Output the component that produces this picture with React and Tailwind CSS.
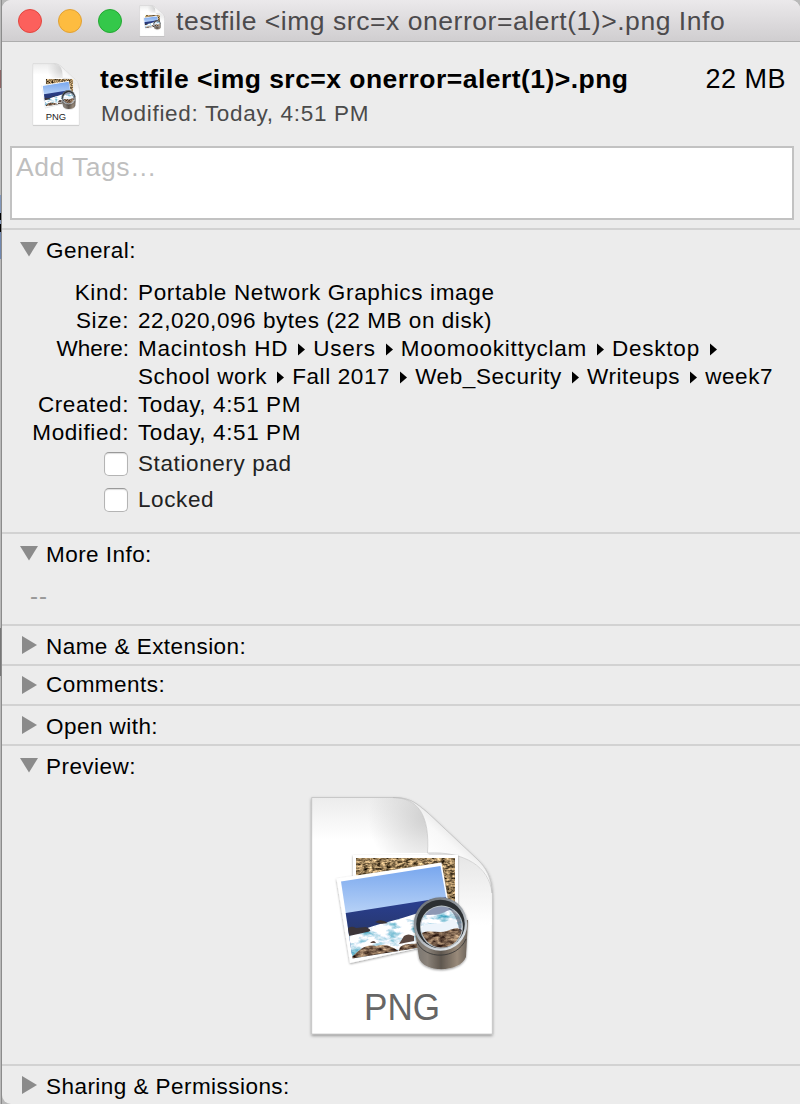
const doc = 'M11.7 12.5H93C110 12.5 116 18 128 28L178 75C188 85 192.3 93 192.3 112V249H11.7Z';

function PhotoArt({ id }) {
  return (
    <g>
      <defs>
        <linearGradient id={id + 'sky'} x1="0" y1="0" x2="0" y2=".5">
          <stop offset="0" stopColor="#77a6ee" />
          <stop offset="1" stopColor="#b9d3f7" />
        </linearGradient>
        <linearGradient id={id + 'sea'} x1="0" y1="0" x2="0" y2="1">
          <stop offset="0" stopColor="#2a3f95" />
          <stop offset=".6" stopColor="#27386f" />
          <stop offset="1" stopColor="#2f5aa5" />
        </linearGradient>
        <linearGradient id={id + 'barrel'} x1="0" y1="0" x2="1" y2="0">
          <stop offset="0" stopColor="#77736e" />
          <stop offset=".25" stopColor="#8a8279" />
          <stop offset=".5" stopColor="#5f574f" />
          <stop offset=".8" stopColor="#998a7a" />
          <stop offset="1" stopColor="#6a625a" />
        </linearGradient>
        <linearGradient id={id + 'rim'} x1="0" y1="0" x2=".6" y2="1">
          <stop offset="0" stopColor="#5c6268" />
          <stop offset=".45" stopColor="#959ba1" />
          <stop offset="1" stopColor="#dde3e8" />
        </linearGradient>
        <filter id={id + 'peb'} x="0" y="0" width="1" height="1" colorInterpolationFilters="sRGB">
          <feTurbulence type="fractalNoise" baseFrequency=".22 .42" numOctaves="3" seed="4" />
          <feColorMatrix values="1.6 0 0 0 -.2  1.4 0 0 0 -.2  1.1 0 0 0 -.2  0 0 0 0 1" />
        </filter>
        <filter id={id + 'foam'} x="0" y="0" width="1" height="1" colorInterpolationFilters="sRGB">
          <feTurbulence type="fractalNoise" baseFrequency=".08 .17" numOctaves="4" seed="9" result="n" />
          <feColorMatrix in="n" values="1.7 0 0 0 .08  .8 0 0 0 .56  .6 0 0 0 .69  0 0 0 0 1" result="c" />
          <feComposite in="c" in2="SourceGraphic" operator="in" />
        </filter>
        <filter id={id + 'rock'} x="0" y="0" width="1" height="1" colorInterpolationFilters="sRGB">
          <feTurbulence type="fractalNoise" baseFrequency=".15 .3" numOctaves="3" seed="2" result="n" />
          <feColorMatrix in="n" values="1.2 0 0 0 -.12  1.1 0 0 0 -.17  .9 0 0 0 -.15  0 0 0 0 1" result="c" />
          <feComposite in="c" in2="SourceGraphic" operator="in" />
        </filter>
        <filter id={id + 'sh'} x="-.2" y="-.2" width="1.4" height="1.4">
          <feDropShadow dx="0" dy="1" stdDeviation="1" floodOpacity=".4" />
        </filter>
        <clipPath id={id + 'photo'}><path d="M41 96.5L140.5 81L154 157L52.5 173.5Z" /></clipPath>
        <clipPath id={id + 'lens'}><circle cx="141.5" cy="142" r="20.5" /></clipPath>
      </defs>
      <path d="M53 70H158V150H53Z" fill="#fff" filter={`url(#${id}sh)`} />
      <path d="M56 73H155V146H56Z" filter={`url(#${id}peb)`} />
      <path d="M36.500 93.500L141.500 77.500L155 155L50 178Z" fill="#fff" filter={`url(#${id}sh)`} />
      <g clipPath={`url(#${id}photo)`}>
        <path d="M38 80H160V180H38Z" fill={`url(#${id}sky)`} />
        <path d="M40 129L160 110V160L40 170Z" fill={`url(#${id}sea)`} />
        <path d="M46 150C62 146 68 142 80 139S102 133 122 127L160 120V180H46Z" fill="#fff" filter={`url(#${id}foam)`} />
        <path d="M75 137Q81 133 88 138Q80 140 75 137M47 144Q51 140 56 143L66 142Q74 146 67 147L49 151Z" fill="#3b3438" />
        <path d="M51 173C61 163 66 159 76 161C86 158 92 162 99 166L105 172V185H51ZM100 162C107 157 114 160 118 158L121 174L98 169Z" fill="#000" filter={`url(#${id}rock)`} />
        <path d="M104 151Q108 148 114 151V156L99 159ZM70 158Q74 154 76 158Z" fill="#5a4740" />
      </g>
      <g filter={`url(#${id}sh)`}>
        <path d="M114 140L119 173C123 188 160 188 166 172L168 135Z" fill={`url(#${id}barrel)`} />
        <circle cx="140.500" cy="139" r="26.700" fill={`url(#${id}rim)`} />
      </g>
      <path d="M117 157C125 175 157 175 166 154" fill="none" stroke="#343434" strokeWidth=".8" />
      <circle cx="140.500" cy="139" r="24.300" fill="#2c3033" />
      <circle cx="141.500" cy="142" r="21.500" fill="#b9c2c6" />
      <g clipPath={`url(#${id}lens)`}>
        <path d="M120 120H164V165H120Z" fill="#8d98b4" />
        <path d="M118 132C128 128 135 132 145 127S156 128 164 133V160H118Z" fill="#fff" filter={`url(#${id}foam)`} />
        <path d="M120 144C128 135 138 141 145 137S156 134 158 141V150H120Z" fill="#edf4fb" />
        <path d="M118 150C127 143 138 149 147 146S156 142 164 146V170H118Z" fill="#000" filter={`url(#${id}rock)`} />
        <path d="M153 121C161 128 164 138 160 148C158 138 156 129 148 123Z" fill="#4a5264" opacity=".6" />
      </g>
    </g>
  );
}

function Page({ id }) {
  return (
    <g>
      <defs>
        <linearGradient id={id + 'top'} x1="0" y1="0" x2="0" y2="1">
          <stop offset="0" stopColor="#ececec" />
          <stop offset=".18" stopColor="#fff" />
        </linearGradient>
        <radialGradient id={id + 'curl'} gradientUnits="userSpaceOnUse" cx="128" cy="32" r="60">
          <stop offset="0" stopColor="#cfcfcf" />
          <stop offset="1" stopColor="#cfcfcf" stopOpacity="0" />
        </radialGradient>
        <linearGradient id={id + 'fold'} gradientUnits="userSpaceOnUse" x1="135" y1="70" x2="157" y2="46">
          <stop offset="0" stopColor="#fdfdfd" />
          <stop offset=".55" stopColor="#f8f8f8" />
          <stop offset="1" stopColor="#e6e6e6" />
        </linearGradient>
        <filter id={id + 'ps'} x="-.1" y="-.1" width="1.2" height="1.2">
          <feDropShadow dx="0" dy="1.500" stdDeviation="1.500" floodOpacity=".4" />
        </filter>
        <linearGradient id={id + 'under'} x1="0" y1="0" x2="0" y2="1">
          <stop offset="0" stopColor="#dadada" />
          <stop offset="1" stopColor="#fff" />
        </linearGradient>
      </defs>
      <path d={doc} fill={`url(#${id}top)`} stroke="#b5b5b5" strokeWidth=".6" filter={`url(#${id}ps)`} />
      <path d="M60 13H93C118 13 130 30 127.500 68H60Z" fill={`url(#${id}curl)`} />
      <path d="M127.500 68C165 66 189 82 192 110V140H160C158 110 140 80 127.500 68Z" fill={`url(#${id}under)`} opacity=".7" />
      <path d="M93 12.500C118 13 130 30 127.500 68C165 66 189 82 192 108C191 92 186 83 178 75L128 28C116 18 110 12.500 93 12.500Z" fill={`url(#${id}fold)`} stroke="#bcbcbc" strokeWidth=".6" />
    </g>
  );
}

function DocIcon({ id, className, viewBox, art, label, labelSize, labelY, labelFill, labelWidth }) {
  return (
    <svg className={className} viewBox={viewBox} preserveAspectRatio="none">
      <Page id={id} />
      <g transform={art}><PhotoArt id={id} /></g>
      {label && (
        <text x="102" y={labelY} textAnchor="middle" fontSize={labelSize} textLength={labelWidth} lengthAdjust="spacingAndGlyphs" fill={labelFill} fontFamily="Liberation Sans, sans-serif">PNG</text>
      )}
    </svg>
  );
}

function Triangle({ open }) {
  return (
    <svg className="h-[18px] w-[18px] shrink-0" viewBox="0 0 18 18" fill="#8b8b8b">
      <path d={open ? 'M0 2H18L9 16.500Z' : 'M2 0L17 9L2 18Z'} />
    </svg>
  );
}

function Section({ title, open, className, headClass = '-mt-[3px]', children }) {
  return (
    <section className={`border-t-2 border-[#d2d2d2] pl-[18px] ${className}`}>
      <div className="flex pt-[10px]">
        <Triangle open={open} />
        <h2 className={`ml-2 text-[22.5px] leading-7 tracking-[0.45px] whitespace-nowrap ${headClass}`}>{title}</h2>
      </div>
      {children}
    </section>
  );
}

function Sep() {
  return (
    <svg className="mr-[8px] ml-[10px] inline-block h-[14px] w-[7px] align-[-1px]" viewBox="0 0 7 14"><path d="M0 0.500L7 6.500L0 12.500Z" /></svg>
  );
}

function Row({ label, children }) {
  return (
    <>
      <dt className="text-right">{label}</dt>
      <dd className="whitespace-nowrap">{children}</dd>
    </>
  );
}

function Check({ label }) {
  return (
    <label className="flex h-9 items-center pl-[84px] text-[22.5px] tracking-[0.6px] text-[#222]">
      <span className="mr-[10px] h-6 w-6 rounded-[5px] border border-[#b4b4b4] border-t-[#999] bg-white shadow-[inset_0_1px_1px_#ddd]" />
      {label}
    </label>
  );
}

export default function App() {
  return (
    <div className="flex h-[1104px] w-[800px] overflow-hidden bg-[#b9b9b9] font-['Liberation_Sans',Arial,sans-serif] text-black">
      <div className="flex w-[2px] shrink-0 flex-col border-r border-[#8c8c8c]">
        <div className="h-[70px]" />
        <div className="h-[18px] bg-[#8b6464]" />
        <div className="h-[107px]" />
        <div className="h-[18px] bg-[#8297ba]" />
        <div className="h-[7px] bg-black" />
        <div className="h-[4px] bg-[#8297ba]" />
        <div className="h-[8px] bg-black" />
        <div className="h-[27px] bg-[#7088b0]" />
        <div className="h-[369px]" />
        <div className="h-[48px] bg-[#777]" />
      </div>
      <div className="flex w-[798px] flex-col overflow-hidden rounded-t-[9px] rounded-bl-[9px] bg-[#ececec]">
        <header className="flex h-[42px] shrink-0 items-center border-b border-[#adadad] bg-linear-to-b from-[#ebe9eb] to-[#d0ced0] pl-4">
          <div className="flex gap-4">
            <span className="h-6 w-6 rounded-full border border-[#e2463f] bg-[#fc605c]" />
            <span className="h-6 w-6 rounded-full border border-[#e0a034] bg-[#fdbc40]" />
            <span className="h-6 w-6 rounded-full border border-[#24a832] bg-[#34c84a]" />
          </div>
          <DocIcon id="a" className="ml-[17px] h-[32px] w-[26px]" viewBox="6 8 192 248" art="translate(2 16) scale(.98)" />
          <h1 className="ml-[11px] text-[26.5px] leading-8 tracking-[0.54px] whitespace-nowrap text-[#4c4a4c]">{'testfile <img src=x onerror=alert(1)>.png Info'}</h1>
        </header>
        <div className="flex h-[104px] shrink-0 pr-[14px] pl-[29px]">
          <DocIcon id="b" className="mt-5 h-[66px] w-[50px]" viewBox="4 6 196 255" art="translate(8 0) scale(1.02)" label labelSize="37" labelY="231" labelWidth="80" labelFill="#222" />
          <div className="ml-[19px]">
            <div className="mt-[21px] text-[26.5px] leading-8 font-bold tracking-[0.46px] whitespace-nowrap">{'testfile <img src=x onerror=alert(1)>.png'}</div>
            <div className="mt-[5px] ml-[1px] text-[22.5px] leading-7 tracking-[0.68px] text-[#4a4a4a]">Modified: Today, 4:51 PM</div>
          </div>
          <div className="mt-[21px] ml-auto text-[27px] leading-8 tracking-[0.5px]">22 MB</div>
        </div>
        <div className="mr-[6px] ml-2 h-[74px] shrink-0 border-2 border-[#c2c2c2] bg-white px-1 pt-[3px] text-[26.5px] leading-8 tracking-[0.5px] text-[#bfbfbf]">Add Tags…</div>
        <main className="mt-2 flex flex-col">
          <Section title="General:" open className="h-[304px]">
            <dl className="mt-[14px] -mb-px grid grid-cols-[109px_auto] gap-x-[9px] text-[22.5px] leading-7 tracking-[0.6px]">
              <Row label="Kind:"><span className="tracking-[0.65px]">Portable Network Graphics image</span></Row>
              <Row label="Size:"><span className="tracking-[0.55px]">22,020,096 bytes (22 MB on disk)</span></Row>
              <Row label={<span className="tracking-normal">Where:</span>}>
                <span className="tracking-[0.75px]">Macintosh HD<Sep />Users<Sep />Moomookittyclam<Sep />Desktop<Sep /></span><br />
                School work<Sep />Fall 2017<Sep />Web_Security<Sep />Writeups<Sep />week7
              </Row>
              <Row label="Created:">Today, 4:51 PM</Row>
              <Row label="Modified:">Today, 4:51 PM</Row>
            </dl>
            <Check label="Stationery pad" />
            <Check label="Locked" />
          </Section>
          <Section title="More Info:" open className="h-[92px]">
            <div className="mt-[13px] ml-[10px] text-[24px] leading-7 tracking-[1px] text-[#999]">--</div>
          </Section>
          <Section title="Name &amp; Extension:" className="h-10" />
          <Section title="Comments:" className="h-10" headClass="-mt-[5px]" />
          <Section title="Open with:" className="h-10" />
          <Section title="Preview:" open className="h-80">
            <DocIcon id="c" className="mt-1 ml-[280px] h-[260px] w-[205px]" viewBox="0 0 205 260" art="" label labelSize="37" labelY="235" labelWidth="76" labelFill="#666" />
          </Section>
          <Section title="Sharing &amp; Permissions:" className="h-10" />
        </main>
      </div>
    </div>
  );
}
